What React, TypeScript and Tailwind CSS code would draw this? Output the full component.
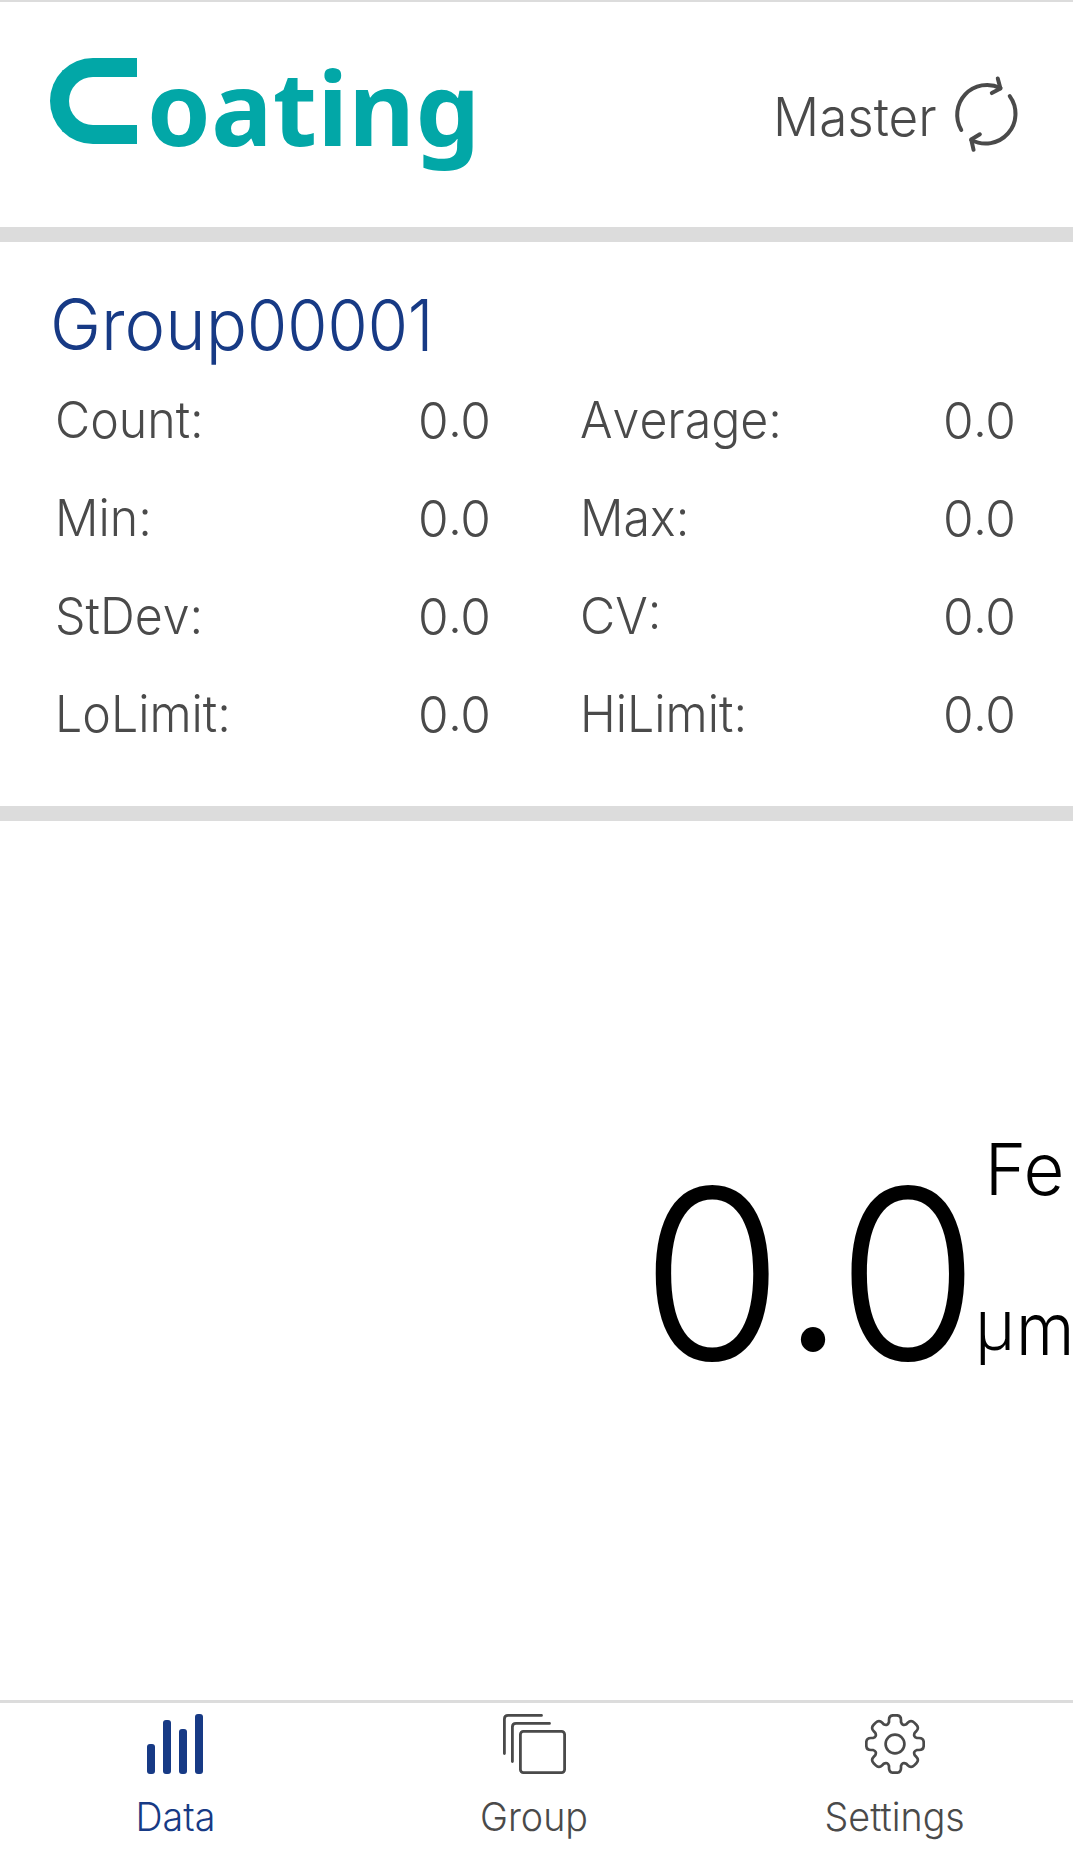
const stats = [
  { label: 'Count:', value: '0.0' },
  { label: 'Average:', value: '0.0' },
  { label: 'Min:', value: '0.0' },
  { label: 'Max:', value: '0.0' },
  { label: 'StDev:', value: '0.0' },
  { label: 'CV:', value: '0.0' },
  { label: 'LoLimit:', value: '0.0' },
  { label: 'HiLimit:', value: '0.0' }
];

// eight rounded teeth around the origin
const gearPath = () => {
  const at = (t: number, r: number, deg: number) => {
    const a = (deg * Math.PI) / 180;
    const x = t * Math.cos(a) + r * Math.sin(a);
    const y = t * Math.sin(a) - r * Math.cos(a);
    return `${x.toFixed(2)} ${y.toFixed(2)}`;
  };
  let d = '';
  for (let i = 0; i < 8; i++) {
    const deg = i * 45;
    d += i === 0 ? `M${at(-6, 22, deg)}` : '';
    d += `L${at(-6, 24, deg)}Q${at(-6, 28.7, deg)} ${at(-1.5, 28.7, deg)}`;
    d += `L${at(1.5, 28.7, deg)}Q${at(6, 28.7, deg)} ${at(6, 24, deg)}L${at(6, 22, deg)}`;
    d += `Q${at(0, 19.2, deg + 22.5)} ${at(-6, 22, deg + 45)}`;
  }
  return d + 'Z';
};

function Logo() {
  return (
    <div className="flex items-start text-[#02a7a7]">
      <div className="mt-[58px] h-[86px] w-[87px] rounded-l-full border-[19px] border-r-0 border-current" aria-label="C" />
      <span className="ml-[10px] mt-[50px] font-['Noto_Sans'] text-[102px] font-bold leading-[114px] tracking-[0.5px]">oating</span>
    </div>
  );
}

function SyncIcon() {
  return (
    <svg className="h-[80px] w-[73px]" viewBox="0 0 220 240" fill="none" stroke="currentColor" strokeWidth="12" strokeLinecap="round" strokeLinejoin="round">
      <path d="M34 171A90 90 0 0 1 152 45" />
      <path d="M144 16L152 46L126 60" />
      <path d="M180 69A90 90 0 0 1 64 201" />
      <path d="M90 184L64 200L71 231" />
    </svg>
  );
}

function DataIcon() {
  return (
    <svg className="h-[60px] w-[56px]" viewBox="0 0 56 60" fill="currentColor">
      <rect x="0" y="30" width="8" height="30" rx="3" />
      <rect x="16" y="6" width="8" height="54" rx="3" />
      <rect x="32" y="15" width="8" height="45" rx="3" />
      <rect x="48" y="0" width="8" height="60" rx="3" />
    </svg>
  );
}

function GroupIcon() {
  return (
    <svg className="h-[60px] w-[63px]" viewBox="0 0 63 60" fill="none" stroke="currentColor" strokeWidth="2.8" strokeLinecap="round">
      <path d="M1.4 39.5V5Q1.4 1.4 5 1.4H38.5" />
      <path d="M9.4 47.5V13Q9.4 9.4 13 9.4H46.5" />
      <rect x="17.4" y="17.4" width="44.2" height="41.2" rx="3" />
    </svg>
  );
}

function GearIcon() {
  return (
    <svg className="size-[60px]" viewBox="-30 -30 60 60" fill="none" stroke="currentColor" strokeWidth="2.7">
      <path d={gearPath()} strokeLinejoin="round" />
      <circle r="9.4" />
    </svg>
  );
}

// decimal point sits slightly above the baseline
function Reading({ value }: { value: string }) {
  const [whole, fraction] = value.split('.');
  return (
    <>
      {whole}
      <span className="ml-[-0.0125em] mr-[-0.0385em] align-[0.04em] leading-[0.5]">.</span>
      {fraction}
    </>
  );
}

const tabs = [
  { label: 'Data', icon: DataIcon, color: 'text-[#173a85]' },
  { label: 'Group', icon: GroupIcon, color: 'text-[#4a4a4a]' },
  { label: 'Settings', icon: GearIcon, color: 'text-[#4a4a4a]' }
];

export default function App() {
  return (
    <div className="flex h-[1849px] w-[1073px] flex-col overflow-hidden bg-white font-[Inter,sans-serif] font-light text-[#4a4a4a]">
      <header className="flex h-[227px] items-start border-t-2 border-[#dcdcdc] pl-[50px]">
        <div className="-mt-[2px] w-[723px]">
          <Logo />
        </div>
        <span className="mt-[77px] w-[177px] origin-left scale-x-[0.967] whitespace-nowrap text-[53px] leading-[76px]">Master</span>
        <div className="mt-[71px]">
          <SyncIcon />
        </div>
      </header>

      <section className="h-[594px] border-y-[15px] border-[#dcdcdc]">
        <h1 className="flex pl-[50px] pt-[35px] text-[71px] leading-[94px] text-[#173a85]">
          <span className="w-[197px] origin-left scale-x-[0.967]">Group</span>
          <span className="origin-left translate-y-px scale-x-[0.917]">00001</span>
        </h1>
        <div className="grid grid-cols-[436px_436px] gap-x-[89px] pl-[55px]">
          {stats.map((stat) => (
            <div key={stat.label} className="flex h-[98px] justify-between text-[51px] leading-[98px]">
              <span className="origin-left scale-x-[0.947] [font-kerning:none]">{stat.label}</span>
              <span className="origin-right translate-y-px scale-x-[0.973]">
                <Reading value={stat.value} />
              </span>
            </div>
          ))}
        </div>
      </section>

      <main className="flex flex-1 items-start pl-[641px] pt-[312px] text-black">
        <span className="mt-[22px] w-[336px] origin-left scale-x-[0.973] whitespace-nowrap text-[237px] leading-[237px]">
          <Reading value="0.0" />
        </span>
        <div className="flex flex-col whitespace-nowrap text-[72px] leading-[72px]">
          <span className="origin-left scale-x-[0.98] pl-[8px]">Fe</span>
          <div className="mt-[88px] flex">
            <span className="-ml-[2px] -mt-[3px] w-[41px] origin-left font-[Roboto] font-[350]">µ</span>
            <span className="w-[57px] origin-left scale-x-[0.93]">m</span>
          </div>
        </div>
      </main>

      <nav className="grid h-[149px] grid-cols-[350px_368px_354px] border-t-[3px] border-[#dcdcdc]">
        {tabs.map((tab) => (
          <button key={tab.label} className={`flex flex-col items-center pt-[11px] ${tab.color}`}>
            <tab.icon />
            <span className="mt-[10px] scale-x-[0.965] text-[39px] leading-[65px]">{tab.label}</span>
          </button>
        ))}
      </nav>
    </div>
  );
}
